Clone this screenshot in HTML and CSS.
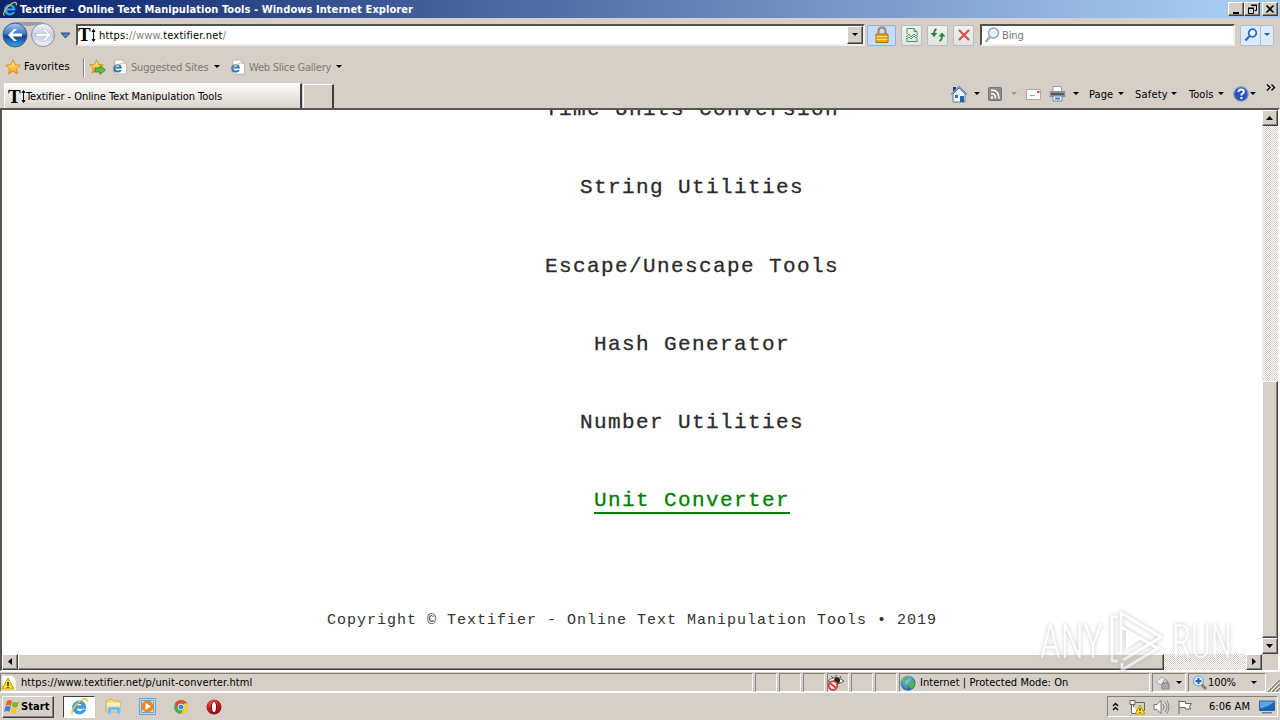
FILE: index.html
```html
<!DOCTYPE html>
<html lang="en">
<head>
<meta charset="utf-8">
<title>Textifier - Online Text Manipulation Tools</title>
<link rel="stylesheet" href="styles.css">
</head>
<body>
<svg class="defs" width="0" height="0">
  <defs>
    <linearGradient id="gBlue" x1="0" y1="0" x2="0" y2="1"><stop offset="0" stop-color="#a9c9ee"/><stop offset=".45" stop-color="#3c78c4"/><stop offset=".55" stop-color="#0f4292"/><stop offset="1" stop-color="#39a5ee"/></linearGradient>
    <linearGradient id="gPale" x1="0" y1="0" x2="0" y2="1"><stop offset="0" stop-color="#f4f7fb"/><stop offset=".5" stop-color="#c2cedf"/><stop offset="1" stop-color="#f2f5fa"/></linearGradient>
    <linearGradient id="gStar" x1="0" y1="0" x2="0" y2="1"><stop offset="0" stop-color="#fff09a"/><stop offset="1" stop-color="#f5a00a"/></linearGradient>
    <radialGradient id="gGlobe" cx=".4" cy=".3" r=".7"><stop offset="0" stop-color="#9ed6f8"/><stop offset="1" stop-color="#1655a8"/></radialGradient>
    <radialGradient id="gOpera" cx=".4" cy=".25" r=".8"><stop offset="0" stop-color="#ef6a62"/><stop offset=".5" stop-color="#c41d22"/><stop offset="1" stop-color="#8d0d12"/></radialGradient>
  </defs>
  <symbol id="ie" viewBox="0 0 16 16"><path d="M13.300 9.500H5.300c.2 3 3.800 3.500 5 1.400h2.800C10.800 16 2.300 15.500 2.200 8.700 2.300 1.700 13.700 1.200 13.300 9.500zM5.300 7.400h4.900C9.900 4.700 5.600 4.700 5.300 7.400z" fill="#38a6ee" stroke="#1767b4" stroke-width=".5"/><path d="M2.500 14.500C-1 13 6.500 3 12.500 1.500c2.200-.4 2.200 1.200 1.600 2.700" fill="none" stroke="#eec63a" stroke-width="1.200"/></symbol>
  <symbol id="iepage" viewBox="0 0 16 16"><path d="M3 .5h9l3.500 3.500v11.500H3z" fill="#fff" stroke="#b5b5b5"/><path d="M12 .5V4h3.500" fill="#ddd" stroke="#b5b5b5"/><path d="M10.500 9.600H3.700c.3 2.700 3.400 2.700 4.500 1.500h2.100C8.500 15.500 1 14.500 1.200 9 1.500 3.500 11 3.500 10.500 9.600zM3.800 7.800h4.100C7.500 5.700 4.200 5.700 3.800 7.800z" fill="#1d73c8"/><path d="M1 13.500C0 11 6 4.500 11 4" fill="none" stroke="#e8b820"/></symbol>
  <symbol id="star" viewBox="0 0 16 16"><path d="M8 .8l2.100 4.900 5.200.5-3.900 3.500 1.200 5.300L8 12.200 3.400 15l1.200-5.300L.7 6.200l5.200-.5z" fill="url(#gStar)" stroke="#d98a12" stroke-width=".9"/></symbol>
  <symbol id="caret" viewBox="0 0 7 4"><path d="M0 0h6L3 3z" fill="currentColor"/></symbol>
  <symbol id="globe" viewBox="0 0 16 16"><circle cx="8" cy="8" r="7.500" fill="url(#gGlobe)"/><path d="M3 4c2-3 5-3 6-2l-1 3-3 1-1 3-2-1zM9 7l4-2 2 4-3 5-3-2z" fill="#50b848"/><path d="M4 11l3 1v2l-2-1z" fill="#50b848"/></symbol>
</svg>

<header class="titlebar">
  <svg class="title-icon" width="16" height="16"><use href="#ie"/></svg>
  <span class="title-text">Textifier - Online Text Manipulation Tools - Windows Internet Explorer</span>
  <div class="winbtns">
    <svg class="raised" width="16" height="14"><path d="M4 9h6v2H4z"/></svg>
    <svg class="raised" width="16" height="14"><path d="M6.500 2.500h5v5h-2M6 2h6M3.500 5.500h5v5h-5zM3 5h6" fill="none" stroke="#000"/></svg>
    <svg class="raised last" width="16" height="14"><path d="M3.500 2.500l7 7M10.500 2.500l-7 7" stroke="#000" stroke-width="1.700"/></svg>
  </div>
</header>

<nav class="addressrow">
  <svg class="navbtns" width="74" height="30" viewBox="0 0 74 30">
    <path d="M14 2h30q-8 4-15 4T14 2z" fill="#9a9da5"/>
    <circle cx="15" cy="15" r="12" fill="url(#gBlue)" stroke="#375b90"/>
    <path d="M8 15l6-6h3l-4.500 4.500H22v3h-9.500L17 21h-3z" fill="#fff"/>
    <circle cx="43" cy="15" r="11.500" fill="url(#gPale)" stroke="#8490a4"/>
    <path d="M51 15l-6-6h-3l4.500 4.500H36v3h10.500L42 21h3z" fill="#fff" stroke="#a5aebf" stroke-width=".5"/>
    <path d="M61 13h9l-4.500 5z" fill="#4688ba" stroke="#1b4672" stroke-width=".9"/>
  </svg>
  <div class="field address">
    <span class="ti">T<svg width="5" height="15" viewBox="0 0 5 15"><path d="M2.500 2v11M1 3.500L2.500 1.500 4 3.500zM1 11.500l1.500 2 1.500-2z" fill="#111" stroke="#111"/></svg></span>
    <span class="url"><span>https:</span><em>//www.</em>textifier.net<em>/</em></span>
    <div class="raised drop"><svg width="7" height="4"><use href="#caret"/></svg></div>
  </div>
  <div class="softbtn lock"><svg width="16" height="18" viewBox="0 0 16 18"><path d="M4.500 9V5q0-3.500 3.500-3.500T11.500 5v4" fill="none" stroke="#9c8a58" stroke-width="2"/><path d="M2 8h12v8.500H2z" fill="#e9a81c" stroke="#a87512"/><path d="M2.500 10.500h11M2.500 13.500h11" stroke="#ffdf70"/></svg></div>
  <div class="softbtn green"><svg width="14" height="16" viewBox="0 0 14 16"><path d="M2 7V1.500h7l3 3V7M2 11v3.500h10V11M9 1.500v3h3M1 10l3-3 2 3 3-3 2 2 2-2M1 12l3-2 2 2 3-3 2 2 2-2" fill="none" stroke="#4aa052"/></svg></div>
  <div class="softbtn green"><svg width="16" height="14" viewBox="0 0 16 14"><path d="M6.500 1Q4 2 4 6M9.500 13q2.500-1 2.500-5" fill="none" stroke="#268535" stroke-width="1.800"/><path d="M.5 5h7L4 9zM8.500 8.500h7L12 4.500z" fill="#268535"/></svg></div>
  <div class="softbtn green"><svg width="14" height="14" viewBox="0 0 14 14"><path d="M2 2l10 10M12 2L2 12" stroke="#d0504c" stroke-width="2.200"/></svg></div>
  <div class="field search">
    <svg width="16" height="17" viewBox="0 0 16 17"><circle cx="9.500" cy="6" r="5" fill="#e8f4fc" stroke="#8fa3b5" stroke-width="1.400"/><path d="M6 10l-4.500 5" stroke="#a4aab0" stroke-width="2.500"/></svg>
    <span>Bing</span>
  </div>
  <div class="softbtn go"><svg width="14" height="14" viewBox="0 0 14 14"><circle cx="8.500" cy="5" r="3.800" fill="#eaf5ff" stroke="#286ac9" stroke-width="1.800"/><path d="M5.500 8l-4 4.500" stroke="#286ac9" stroke-width="2.200"/></svg></div>
  <div class="softbtn godrop"><svg width="7" height="4"><use href="#caret"/></svg></div>
</nav>

<div class="favrow">
  <svg class="s1" width="16" height="16"><use href="#star"/></svg>
  <span class="favtext">Favorites</span>
  <i class="sep"></i>
  <svg class="addfav" width="17" height="16"><use href="#star" width="15" height="15"/><path d="M6 9h5V6.500l5.500 4.500-5.500 4.500V13H6z" fill="#59c13e" stroke="#2e8b22" stroke-width=".8"/></svg>
  <svg class="p1" width="15" height="16"><use href="#iepage"/></svg>
  <span class="link suggested">Suggested Sites</span>
  <svg class="car" width="7" height="4"><use href="#caret"/></svg>
  <svg class="p2" width="15" height="16"><use href="#iepage"/></svg>
  <span class="link slice">Web Slice Gallery</span>
  <svg class="car" width="7" height="4"><use href="#caret"/></svg>
</div>

<div class="tabrow">
  <div class="tab">
    <span class="ti">T<svg width="5" height="15" viewBox="0 0 5 15"><path d="M2.500 2v11M1 3.500L2.500 1.500 4 3.500zM1 11.500l1.500 2 1.500-2z" fill="#111" stroke="#111"/></svg></span>
    <span class="tabtext">Textifier - Online Text Manipulation Tools</span>
  </div>
  <div class="newtab"></div>
  <div class="commands">
    <div class="cmd home"><svg width="18" height="18" viewBox="0 0 18 18"><path d="M3 9l6-6 6 6v8H3z" fill="#eef5fc" stroke="#64809f"/><path d="M3 2h3v5H3z" fill="#27339a"/><path d="M1 9.500L9 1.500l8 8" fill="none" stroke="#6b98c8" stroke-width="1.500"/><path d="M10 11h4v6h-4z" fill="#2369a8"/><path d="M5 10h3v3H5z" fill="#4c6f98"/></svg><svg class="c" width="7" height="4"><use href="#caret"/></svg></div>
    <div class="cmd rss"><svg width="14" height="14" viewBox="0 0 14 14"><rect x=".5" y=".5" width="13" height="13" rx="1" fill="#8b8b8b" stroke="#737373"/><circle cx="4" cy="10.500" r="1.200" fill="#fff"/><path d="M3 6.500q4.500 0 4.500 5M3 3q8 0 8 8.500" fill="none" stroke="#fff" stroke-width="1.500"/></svg><svg class="c" width="7" height="4"><use href="#caret"/></svg></div>
    <div class="cmd mail"><svg width="15" height="11" viewBox="0 0 15 11"><path d="M.5.5h14v10H.5z" fill="#fafafa" stroke="#b0aba5"/><path d="M11 2h2.500v2H11z" fill="#d3453f"/><path d="M4 6.500h5" stroke="#aaa"/></svg></div>
    <div class="cmd print"><svg width="17" height="16" viewBox="0 0 17 16"><path d="M4 .5h8l1 5H4z" fill="#fff" stroke="#999"/><path d="M1 5h15l.5 6H.5z" fill="#8d9299"/><path d="M2 7h13v2H2z" fill="#54585f"/><path d="M4 10h9v5H4z" fill="#eef6ff" stroke="#7c8895"/><path d="M6 12.500h5" stroke="#2e82d0" stroke-width="2"/></svg><svg class="c" width="7" height="4"><use href="#caret"/></svg></div>
    <div class="cmd page"><span>Page</span><svg class="c" width="7" height="4"><use href="#caret"/></svg></div>
    <div class="cmd safety"><span>Safety</span><svg class="c" width="7" height="4"><use href="#caret"/></svg></div>
    <div class="cmd tools"><span>Tools</span><svg class="c" width="7" height="4"><use href="#caret"/></svg></div>
    <div class="cmd help"><svg width="16" height="16" viewBox="0 0 16 16"><circle cx="8" cy="8" r="7.200" fill="#2856b8" stroke="#8799bc" stroke-width="1.300"/><path d="M5.500 6q0-2.500 2.700-2.500 2.600 0 2.600 2.200 0 1.300-1.500 2-.9.500-.9 1.800M8.400 11v2" fill="none" stroke="#fff" stroke-width="1.900"/></svg><svg class="c" width="7" height="4"><use href="#caret"/></svg></div>
    <svg class="more" width="10" height="7" viewBox="0 0 10 7"><path d="M1 .5l3 3-3 3M5.500.5l3 3-3 3" fill="none" stroke="#000" stroke-width="1.400"/></svg>
  </div>
</div>

<main class="viewport">
  <div class="page-content">
    <ul class="menu">
      <li><a>Time Units Conversion</a></li>
      <li><a>String Utilities</a></li>
      <li><a>Escape/Unescape Tools</a></li>
      <li><a>Hash Generator</a></li>
      <li><a>Number Utilities</a></li>
      <li><a class="hover">Unit Converter</a></li>
    </ul>
    <p class="copyright">Copyright © Textifier - Online Text Manipulation Tools • 2019</p>
  </div>
  <div class="vscroll">
    <div class="raised sb"><svg width="8" height="5"><path d="M0 4h7L3.500 0z"/></svg></div>
    <div class="raised vthumb"></div>
    <div class="raised sb"><svg width="8" height="5"><path d="M0 0h7L3.500 4z"/></svg></div>
  </div>
  <div class="hscroll">
    <div class="raised sb"><svg width="5" height="8"><path d="M4 0v7L0 3.500z"/></svg></div>
    <div class="raised hthumb"></div>
    <div class="raised sb right"><svg width="5" height="8"><path d="M0 0v7l4-3.500z"/></svg></div>
  </div>
  <div class="corner"></div>
</main>

<footer class="statusbar">
  <div class="panel url-panel"><svg width="16" height="16" viewBox="0 0 16 16"><path d="M1 .5h10l4 4v11H1z" fill="#fff" stroke="#d8d5d0"/><path d="M7 3L1 14h12z" fill="#ffdf20" stroke="#c39b00"/><path d="M7 7v4M7 12v1" stroke="#222" stroke-width="1.500"/></svg><span>https://www.textifier.net/p/unit-converter.html</span></div>
  <div class="panel tiny"></div><div class="panel tiny"></div><div class="panel tiny"></div>
  <div class="panel tiny"><svg width="18" height="16" viewBox="0 0 18 16"><path d="M1 6q7-7 16 0-8 6-16 0z" fill="#fff" stroke="#555"/><circle cx="10" cy="5.500" r="3" fill="#222"/><path d="M4 1l2 2M9 0v2M14 1l-1 2" stroke="#555"/><circle cx="6" cy="10.500" r="4.300" fill="#f7e2df" stroke="#cb4039" stroke-width="1.800"/><path d="M3 8l6 5" stroke="#cb4039" stroke-width="1.800"/></svg></div>
  <div class="panel tiny"></div><div class="panel tiny"></div>
  <div class="panel zone"><svg width="16" height="16"><use href="#globe"/></svg><span>Internet | Protected Mode: On</span></div>
  <div class="panel filter"><svg width="17" height="16" viewBox="0 0 17 16"><path d="M1 7l6-5 5 4-6 4z" fill="#eee" stroke="#aaa"/><path d="M7 8h7v6H7z" fill="#aaa" stroke="#888"/><path d="M8.500 8V6q2-3 4 0v2" fill="none" stroke="#888"/></svg><svg class="c" width="7" height="4"><use href="#caret"/></svg></div>
  <div class="panel zoom"><svg width="16" height="16" viewBox="0 0 16 16"><path d="M9 9l5 5" stroke="#947c63" stroke-width="3"/><circle cx="6.500" cy="6" r="5" fill="#d7edff" stroke="#6d9ecd"/><path d="M6.500 3v6M3.500 6h6" stroke="#1f63c5" stroke-width="2"/></svg><span>100%</span><svg class="c" width="7" height="4"><use href="#caret"/></svg></div>
  <svg class="grip" width="13" height="13" viewBox="0 0 13 13"><path d="M1 13L13 1M5 13l8-8M9 13l4-4" stroke="#858178" stroke-width="1.500"/><path d="M0 12L12 0M4 12l8-8M8 12l4-4" stroke="#fff"/></svg>
</footer>

<footer class="taskbar">
  <div class="raised start"><svg width="16" height="16" viewBox="0 0 16 16"><path d="M3 2q3-2 5 0L7 7Q4 5 1.500 7z" fill="#e56531"/><path d="M9 2.500q3 2 6 0L13.500 8Q11 9 8 7.500z" fill="#78b82d"/><path d="M1.200 8q3-2 5.500 0L5.200 13q-2-2-5 0z" fill="#3c83d2"/><path d="M7.800 8.500q3 2 5.500 0L12 14q-3 1.500-5.700 0z" fill="#f7c52c"/></svg><b>Start</b></div>
  <div class="active"><svg width="19" height="19"><use href="#ie"/></svg></div>
  <div class="quick">
    <svg width="17" height="17" viewBox="0 0 17 17"><path d="M1 3l6-2 2 2h6v11H1z" fill="#f7df83" stroke="#d1b34c"/><path d="M2 5h13v5H2z" fill="#fbf0b9"/><path d="M3 9h12v7h-3v-4H6v4H3z" fill="#65b4e3" stroke="#a7d4ee"/></svg>
    <svg width="17" height="17" viewBox="0 0 17 17"><path d="M.5.5h16v16H.5z" fill="#bfdbf2" stroke="#6ca0cf"/><path d="M2.500 2.500h12v12h-12z" fill="#dceefb" stroke="#6ca0cf"/><circle cx="8.500" cy="8.500" r="6" fill="#f28618"/><path d="M6.500 5v7l5.500-3.500z" fill="#fff"/></svg>
    <svg width="16" height="16" viewBox="0 0 16 16"><circle cx="8" cy="8" r="7" fill="#4cad50"/><path d="M1.900 4.500A7 7 0 0 1 14.100 4.500H8L5 9.500z" fill="#df4b3d"/><path d="M14.100 4.500A7 7 0 0 1 7.500 15L11 10V4.500z" fill="#f8cc3b"/><circle cx="8" cy="8" r="3.200" fill="#fff"/><circle cx="8" cy="8" r="2.500" fill="#4285dd"/></svg>
    <svg width="16" height="16" viewBox="0 0 16 16"><circle cx="8" cy="8" r="7.500" fill="url(#gOpera)"/><ellipse cx="8" cy="8" rx="3.200" ry="5.800" fill="#7a0a0d"/><ellipse cx="8" cy="8" rx="2" ry="5" fill="#fff"/></svg>
  </div>
  <div class="tray">
    <svg class="chev" width="7" height="9" viewBox="0 0 7 9"><path d="M1 4l2.500-2.500L6 4M1 8l2.500-2.500L6 8" fill="none" stroke="#000" stroke-width="1.300"/></svg>
    <svg class="net" width="17" height="16" viewBox="0 0 17 16"><path d="M4.500 3.500h11v8h-11z" fill="#d5cfc7" stroke="#666"/><path d="M1 1.500h5v4H1zM2.500 5.500v9h5v-3" fill="#fff" stroke="#666"/><path d="M11 6l-5 9h10z" fill="#ffdf20" stroke="#b79600"/><path d="M11 9v3M11 13v1" stroke="#222"/></svg>
    <svg class="sound" width="17" height="16" viewBox="0 0 17 16"><path d="M1 5.500h3l4-4v13l-4-4H1z" fill="#fff" stroke="#777"/><path d="M10 5q2 3 0 6M12 3q4 5 0 10M14 1.500q4 6.500 0 13" fill="none" stroke="#888"/></svg>
    <svg class="flag" width="17" height="16" viewBox="0 0 17 16"><path d="M2 15V1M2.500 2.500h6v2h6l-2 3 1 2.500h-5V8.500h-6" fill="#fff" stroke="#666"/></svg>
    <span>6:06 AM</span>
    <svg class="desk" width="16" height="14" viewBox="0 0 16 14"><path d="M.5 1h15v9.500H.5z" fill="#1767be" stroke="#356094"/><path d="M1 8q7 0 14-6v-.5H1z" fill="#5aa6e7"/><path d="M3 12h10v1.500H3z" fill="#6b7d91"/></svg>
  </div>
</footer>

<svg class="watermark" width="204" height="76" viewBox="0 0 204 76">
  <text x="6" y="54" font-size="49" textLength="63" lengthAdjust="spacingAndGlyphs">ANY</text>
  <text x="138" y="54" font-size="49" textLength="60" lengthAdjust="spacingAndGlyphs">RUN</text>
  <path d="M84 13h-6v44h6M87 50V9l40 24M87 9v14l36 21M127 33l-38 23M126 43L88 66v-7" fill="none" stroke="#fff" stroke-width="2.800" stroke-linejoin="round"/>
  <path d="M92 25v20l17-11z" fill="#fff"/>
</svg>
</body>
</html>
```

FILE: styles.css
```css
* { box-sizing: border-box; }
body {
  margin: 0; width: 1280px; height: 720px; overflow: hidden; position: relative;
  display: flex; flex-direction: column;
  background: #d5cfc7; color: #000;
  font: 11px/14px "DejaVu Sans Condensed", "DejaVu Sans", sans-serif;
  font-stretch: condensed; letter-spacing: .05px; white-space: nowrap;
}
svg { display: block; flex: none; }
.defs { position: absolute; }
ul, p { margin: 0; padding: 0; }
.raised {
  background: #d5cfc7; border: 1px solid; border-color: #fff #404040 #404040 #fff;
  box-shadow: inset -1px -1px #858178;
}

.titlebar { height: 18px; flex: none; display: flex; align-items: center; padding: 0 2px; background: linear-gradient(90deg, #0a246a, #a6caf0 95%); color: #fff; }
.title-icon { margin-right: 2px; }
.title-text { font-weight: bold; letter-spacing: .07px; flex: 1; padding-top: 1px; }
.winbtns { display: flex; }
.winbtns .last { margin-left: 2px; }

.addressrow { height: 36px; flex: none; display: flex; align-items: center; padding-bottom: 2px; }
.navbtns { margin-right: 2px; }
.field { height: 22px; background: #fff; border: 2px solid; border-color: #555149 #f0eee9 #f0eee9 #555149; display: flex; align-items: center; }
.address { width: 789px; }
.ti { width: 19px; height: 18px; flex: none; display: flex; align-items: center; font: bold 19px/18px "Liberation Serif", serif; letter-spacing: 0; }
.url { flex: 1; padding: 2px 0 0 2px; letter-spacing: .19px; }
.url em { color: #808080; font-style: normal; }
.drop { width: 16px; height: 18px; display: flex; align-items: center; justify-content: center; padding-left: 1px; }
.softbtn { height: 21px; width: 21px; margin-left: 5px; display: flex; align-items: center; justify-content: center; border: 1px solid #b4bcc4; border-radius: 2px; background: linear-gradient(#f1f2f0, #dfe3e2); }
.softbtn.lock { width: 29px; margin-left: 2px; background: #c5dcfa; border-color: #91b2df; }
.search { width: 255px; margin-left: 6px; padding-left: 2px; color: #777; }
.search span { padding: 2px 0 0 2px; letter-spacing: -.1px; }
.softbtn.go { background: #dceafa; }
.softbtn.godrop { width: 14px; margin-left: -1px; background: #dceafa; color: #205db0; }

.favrow { height: 26px; flex: none; display: flex; align-items: center; padding-left: 5px; }
.favtext { width: 59px; padding-left: 3px; letter-spacing: .12px; }
.sep { width: 2px; height: 19px; border-left: 1px solid #858178; border-right: 1px solid #fff; margin: 0 4px 0 3px; }
.p1 { margin-left: 6px; }
.link { color: #7d7a75; padding: 1px 0 0 4px; letter-spacing: -.17px; }
.suggested { width: 87px; }
.slice { width: 91px; letter-spacing: -.25px; }
.p2 { margin-left: 9px; }

.tabrow { height: 28px; flex: none; display: flex; align-items: flex-end; padding-left: 4px; }
.tab { width: 298px; height: 25px; display: flex; align-items: center; padding: 1px 0 0 3px; border: 1px solid #fff; border-bottom: 0; border-right: 2px solid #404040; background: linear-gradient(#fdfdfc, #d9d4cc); }
.tabtext { margin-left: -1px; letter-spacing: -.05px; }
.newtab { width: 31px; height: 24px; margin-left: 1px; border: 1px solid #fff; border-bottom: 0; border-right: 2px solid #404040; }
.commands { flex: 1; height: 28px; display: flex; align-items: center; padding-left: 616px; position: relative; }
.commands span { padding-top: 1px; }
.cmd { display: flex; align-items: center; justify-content: space-between; flex: none; }
.home { width: 31px; }
.rss { width: 30px; margin-left: 7px; }
.rss .c { color: #9b978f; }
.mail { margin-left: 8px; }
.print { width: 31px; margin-left: 8px; }
.page { width: 36px; margin-left: 9px; }
.safety { width: 43px; margin-left: 10px; letter-spacing: .2px; }
.tools { width: 36px; margin-left: 11px; }
.help { width: 24px; margin-left: 8px; }
.more { align-self: flex-start; margin: 4px 0 0 9px; }

.viewport { height: 563px; flex: none; display: grid; grid-template: 544px 16px / 1260px 16px; border: 2px solid; border-color: #595650 #fff #fff #595650; border-bottom-width: 1px; background: #d5cfc7; }
.page-content { background: #fff; overflow: hidden; font-family: "Liberation Mono", monospace; font-stretch: normal; color: #2b2b2b; text-align: center; }
.menu { list-style: none; margin-top: -39px; padding-left: 120px; font-size: 21px; line-height: 78.3px; letter-spacing: 1.4px; -webkit-text-stroke: .3px; }
.menu a.hover { color: #008000; border-bottom: 2px solid #008000; }
.copyright { margin-top: 70px; font-size: 15px; line-height: 20px; letter-spacing: 1px; color: #333; }
.vscroll, .hscroll { display: flex; background: repeating-conic-gradient(#fff 0 25%, #d5cfc7 0 50%) 0 0 / 2px 2px; }
.vscroll { flex-direction: column; }
.sb { width: 16px; height: 16px; flex: none; display: flex; align-items: center; justify-content: center; }
.vthumb { height: 257px; margin-top: 255px; }
.hthumb { width: 1146px; }
.right { margin-left: auto; }

.watermark { position: absolute; left: 1034px; top: 604px; fill: #fff; opacity: .6; filter: drop-shadow(0 0 2px #999); font-family: Roboto, sans-serif; font-weight: 300; letter-spacing: 0; }

.statusbar { height: 22px; flex: none; display: flex; align-items: center; gap: 2px; border-top: 1px solid #fff; border-bottom: 1px solid #fff; padding-top: 1px; }
.panel { height: 19px; flex: none; display: flex; align-items: center; border: 1px solid; border-color: #858178 #fff #fff #858178; }
.panel span { padding: 1px 0 0 4px; }
.tiny { width: 22px; }
.tiny svg { margin-left: -1px; }
.url-panel { width: 753px; }
.url-panel span { letter-spacing: .09px; }
.zone { width: 251px; }
.filter { width: 34px; justify-content: space-between; padding: 0 2px; }
.zoom { width: 78px; padding-left: 3px; }
.zoom span { width: 44px; padding-left: 0; letter-spacing: -.1px; }
.zoom .c { margin-left: -1px; }
.grip { margin-left: -1px; align-self: flex-end; }

.taskbar { height: 27px; flex: none; display: flex; align-items: center; padding-left: 2px; }
.start { width: 52px; height: 22px; display: flex; align-items: center; gap: 1px; padding-left: 1px; letter-spacing: .1px; }
.start b { padding-top: 1px; }
.active { width: 32px; height: 22px; margin-left: 9px; display: flex; align-items: center; justify-content: center; background: #fff; border: 1px solid; border-color: #404040 #fff #fff #404040; }
.quick { display: flex; align-items: center; gap: 17px; margin-left: 10px; }
.tray { width: 171px; height: 21px; margin: 0 2px 0 auto; display: flex; align-items: center; border: 1px solid; border-color: #858178 #fff #fff #858178; }
.chev { margin-left: 4px; }
.net { margin-left: 10px; }
.sound, .flag { margin-left: 7px; }
.tray span { width: 50px; margin-left: 15px; padding-top: 1px; }
```
